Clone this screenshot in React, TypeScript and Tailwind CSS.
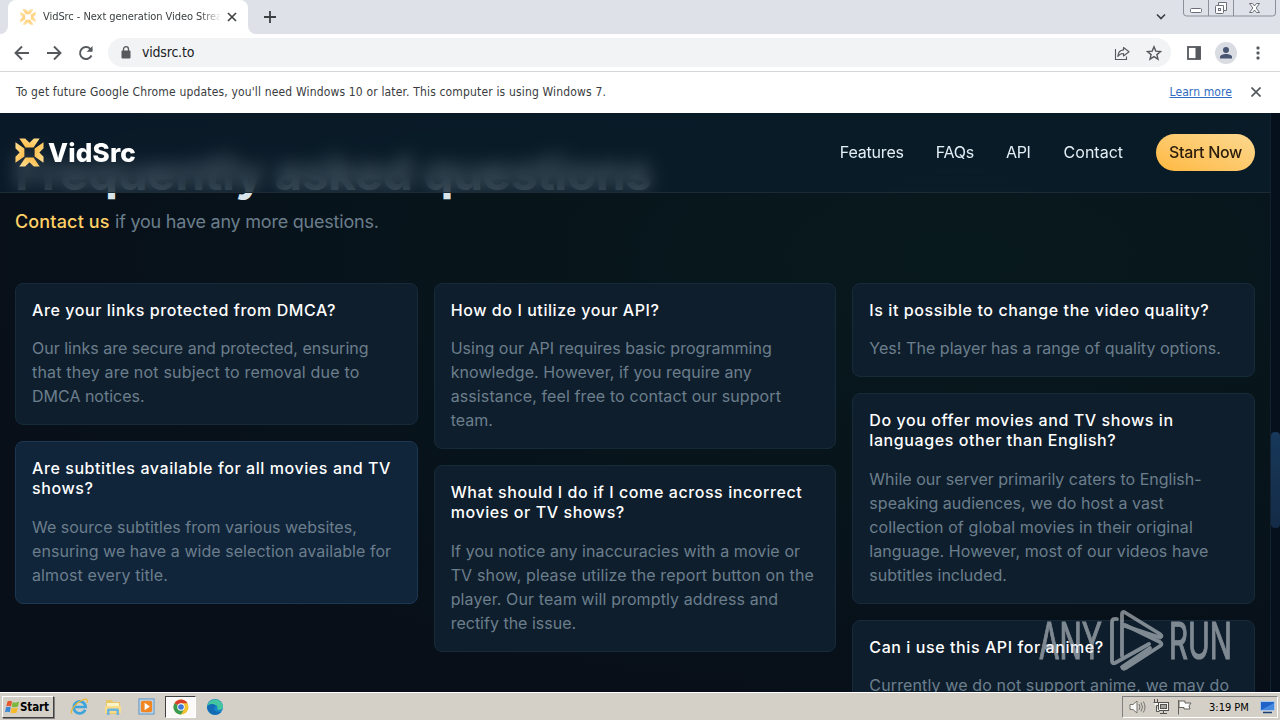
import React from 'react';

// A line is plain text, or text with its own letter spacing class
type Line = string | [string, string];

interface Faq {
  title: string[];
  body: Line[];
  highlight?: boolean;
}

const COLUMNS: Faq[][] = [
  [
    {
      title: ['Are your links protected from DMCA?'],
      body: [
        'Our links are secure and protected, ensuring',
        ['that they are not subject to removal due to', 'tracking-[0.19px]'],
        'DMCA notices.',
      ],
    },
    {
      title: ['Are subtitles available for all movies and TV', 'shows?'],
      body: [
        'We source subtitles from various websites,',
        ['ensuring we have a wide selection available for', 'tracking-[0.05px]'],
        ['almost every title.', 'tracking-[0.13px]'],
      ],
      highlight: true,
    },
  ],
  [
    {
      title: ['How do I utilize your API?'],
      body: [
        ['Using our API requires basic programming', 'tracking-[0.03px]'],
        ['knowledge. However, if you require any', 'tracking-[0.07px]'],
        ['assistance, feel free to contact our support', 'tracking-[0.11px]'],
        'team.',
      ],
    },
    {
      title: ['What should I do if I come across incorrect', 'movies or TV shows?'],
      body: [
        ['If you notice any inaccuracies with a movie or', 'tracking-[0.09px]'],
        ['TV show, please utilize the report button on the', 'tracking-[0.14px]'],
        ['player. Our team will promptly address and', 'tracking-[0.11px]'],
        'rectify the issue.',
      ],
    },
  ],
  [
    {
      title: ['Is it possible to change the video quality?'],
      body: [['Yes! The player has a range of quality options.', 'tracking-[0.04px]']],
    },
    {
      title: ['Do you offer movies and TV shows in', 'languages other than English?'],
      body: [
        'While our server primarily caters to English-',
        ['speaking audiences, we do host a vast', 'tracking-[0.04px]'],
        ['collection of global movies in their original', 'tracking-[0.11px]'],
        ['language. However, most of our videos have', 'tracking-[0.07px]'],
        'subtitles included.',
      ],
    },
    {
      title: ['Can i use this API for anime?'],
      body: [['Currently we do not support anime, we may do', 'tracking-[0.13px]']],
    },
  ],
];

const LogoMark: React.FC<{ className: string }> = ({ className }) => (
  <svg viewBox="0 0 30 30" className={className}>
    <defs>
      <linearGradient id="gold" x1="0" y1="1" x2="1" y2="0">
        <stop offset="0" stopColor="#ffb83f" />
        <stop offset="1" stopColor="#ffdf94" />
      </linearGradient>
    </defs>
    <g fill="url(#gold)">
      {[0, 90, 180, 270].map((deg) => (
        <path key={deg} transform={`rotate(${deg} 15 15)`} d="M4.500 0.500h6l4.500 4.300 4.500-4.300h6l-6.300 9.200h-8.400z" />
      ))}
    </g>
  </svg>
);

const TabStrip = () => (
  <div className="flex h-[34px] bg-[#dee1e8]">
    <div className="flex w-2 items-end bg-white">
      <div className="h-full w-2 rounded-br-lg bg-[#dee1e8]" />
    </div>
    <div className="flex w-[240px] items-center rounded-t-lg bg-white pl-3 pr-[9px]">
      <LogoMark className="h-4 w-4 shrink-0 opacity-75" />
      <div className="ml-[7px] mt-px w-[177px] overflow-hidden whitespace-nowrap text-[11px] tracking-[-0.06px] text-[#3c4043] [mask-image:linear-gradient(to_right,black_157px,transparent_179px)]">
        VidSrc - Next generation Video Streaming
      </div>
      <svg viewBox="0 0 10 10" className="ml-[7px] h-[10px] w-[10px] shrink-0" stroke="#3c4043" strokeWidth="1.600">
        <path d="M1 1l8 8M9 1l-8 8" />
      </svg>
    </div>
    <div className="w-2 bg-white">
      <div className="h-full w-2 rounded-bl-lg bg-[#dee1e8]" />
    </div>
    <div className="flex flex-1 items-center pl-2">
      <svg viewBox="0 0 12 12" className="h-3 w-3" stroke="#3c4043" strokeWidth="1.800">
        <path d="M6 0v12M0 6h12" />
      </svg>
    </div>
    <svg viewBox="0 0 10 8" className="mr-[17px] mt-[13px] h-2 w-[10px]" fill="none" stroke="#3c4043" strokeWidth="1.700">
      <path d="M1 1.500l4 4 4-4" />
    </svg>
    <svg viewBox="0 0 93 17" className="mr-[4px] h-[17px] w-[93px]" fill="none" stroke="#6b6f78">
      <path d="M0.500 0v13q0 3 3 3h86q3 0 3-3V0M25.500 0v16M50.500 0v16" stroke="#8b8f99" />
      <rect x="7.500" y="8.500" width="11" height="4" rx="1" fill="#fff" />
      <path d="M35.500 2.500h8v8h-3v-5h-5z" fill="#fff" />
      <rect x="32.500" y="5.500" width="8" height="8" rx="1" fill="#fff" />
      <rect x="35.500" y="8.500" width="2" height="2" />
      <path d="M66.500 3.500h3l2 2.500 2-2.500h3l-3.300 4.500 3.300 4.500h-3l-2-2.500-2 2.500h-3l3.300-4.500z" fill="#fff" />
    </svg>
  </div>
);

const Toolbar = () => (
  <div className="flex h-[38px] items-center border-b border-[#d5d7da] bg-white pl-[14px] pr-[14px]">
    <svg viewBox="0 0 16 16" className="h-4 w-4" fill="none" stroke="#55585d" strokeWidth="1.900">
      <path d="M15 8H2M8 1.500L1.500 8 8 14.500" />
    </svg>
    <svg viewBox="0 0 16 16" className="ml-4 h-4 w-4" fill="none" stroke="#55585d" strokeWidth="1.900">
      <path d="M1 8h13M8 1.500L14.500 8 8 14.500" />
    </svg>
    <svg viewBox="0 0 16 16" className="ml-4 h-4 w-4" fill="none" stroke="#55585d" strokeWidth="1.900">
      <path d="M13.500 10.500A6 6 0 1 1 12.300 3.800L14 5.500" />
      <path d="M14.500 1v5.800H8.700z" fill="#55585d" stroke="none" />
    </svg>
    <div className="ml-[14px] flex h-[29px] w-[1063px] items-center rounded-full bg-[#f1f3f4] pl-[13px] pr-[9px]">
      <svg viewBox="0 0 10 13" className="h-[13px] w-[10px]">
        <rect x="0.500" y="4.500" width="9" height="8" rx="1" fill="#55585d" />
        <path d="M2.500 5V3.200a2.500 2.500 0 0 1 5 0V5" fill="none" stroke="#55585d" strokeWidth="1.300" />
      </svg>
      <span className="ml-[11px] flex-1 text-[14px] tracking-[-0.2px] text-[#202124]">vidsrc.to</span>
      <svg viewBox="0 0 16 16" className="mr-4 h-4 w-4" fill="none" stroke="#55585d" strokeWidth="1.100">
        <path d="M1.500 4v10.500H12.500V11.500" />
        <path d="M9.500 2.500L15 6.800 9.500 11V8.500C6.500 8.500 5 9.500 3.800 11.500 4 8 6 5.200 9.500 4.900z" strokeLinejoin="round" />
      </svg>
      <svg viewBox="0 0 16 16" className="h-4 w-4" fill="none" stroke="#55585d" strokeWidth="1.400">
        <path d="M8 1.800l1.800 4.300 4.700.4-3.600 3.100 1.100 4.600L8 11.700l-4 2.500 1.100-4.600L1.500 6.500l4.700-.4z" />
      </svg>
    </div>
    <svg viewBox="0 0 14 14" className="ml-4 h-[14px] w-[14px]">
      <rect x="1" y="1" width="12" height="12" fill="none" stroke="#55585d" strokeWidth="1.800" />
      <rect x="8.500" y="1" width="5" height="12" fill="#55585d" />
    </svg>
    <svg viewBox="0 0 22 22" className="ml-[14px] h-[22px] w-[22px]">
      <circle cx="11" cy="11" r="11" fill="#dadce3" />
      <circle cx="11" cy="8" r="3" fill="#475573" />
      <path d="M5 16.500v-1.500c0-2 3-3 6-3s6 1 6 3v1.500z" fill="#475573" />
    </svg>
    <svg viewBox="0 0 4 14" className="ml-[19px] h-[14px] w-1" fill="#55585d">
      <rect x="0.500" y="0.500" width="3" height="3" rx="1" />
      <rect x="0.500" y="5.500" width="3" height="3" rx="1" />
      <rect x="0.500" y="10.500" width="3" height="3" rx="1" />
    </svg>
  </div>
);

const InfoBar = () => (
  <div className="flex h-[41px] items-center bg-white pl-4 pr-[19px] text-[12px] text-[#3a3c40]">
    <span className="flex-1 whitespace-nowrap pb-0.5 tracking-[0.16px]">
      To get future Google Chrome updates, you'll need Windows 10 or later. This computer is using Windows 7.
    </span>
    <a className="pb-0.5 tracking-[0.1px] text-[#2f6cc0] underline">Learn more</a>
    <svg viewBox="0 0 10 10" className="mb-0.5 ml-[19px] h-[10px] w-[10px]" stroke="#55585d" strokeWidth="1.700">
      <path d="M0.500 0.500l9 9M9.500 0.500l-9 9" />
    </svg>
  </div>
);

const Lines: React.FC<{ lines: Line[] }> = ({ lines }) => (
  <>
    {lines.map((line) => {
      const [text, spacing] = typeof line === 'string' ? [line, ''] : line;
      return (
        <span key={text} className={`block whitespace-nowrap ${spacing}`}>
          {text}
        </span>
      );
    })}
  </>
);

const FaqCard: React.FC<{ faq: Faq }> = ({ faq }) => (
  <div
    className={`rounded-lg border p-4 ${
      faq.highlight ? 'border-[#1b3752] bg-[#10243a]' : 'border-[#162a39] bg-[#0f1e2d]'
    }`}
  >
    <h3 className="text-[16px] font-medium leading-5 tracking-[0.58px] text-white">
      <Lines lines={faq.title} />
    </h3>
    <p className="mt-[16.4px] text-[16px] leading-6 text-[#6b7e8c]">
      <Lines lines={faq.body} />
    </p>
  </div>
);

const SiteHeader = () => (
  <header className="absolute inset-x-0 top-0 flex h-20 items-center border-b border-[#1c2b36] bg-[#0b1e2d]/70 px-[15px] backdrop-blur-[9px]">
    <LogoMark className="h-[29px] w-[29px]" />
    <span className="ml-[4px] mt-px text-[26px] font-extrabold leading-none tracking-[0.2px] text-white">VidSrc</span>
    <nav className="ml-auto flex items-center gap-8 text-[16px] text-[#e3eef5]">
      <a className="pb-0.5 tracking-[-0.2px]">Features</a>
      <a className="pb-0.5 tracking-[-0.25px]">FAQs</a>
      <a className="mr-px pb-0.5 tracking-[-0.3px]">API</a>
      <a className="mr-px pb-0.5">Contact</a>
      <a className="flex h-[37px] w-[99px] items-center justify-center whitespace-nowrap rounded-full bg-linear-to-tr from-[#ffb93e] to-[#fbd88e] pb-0.5 font-medium tracking-[-0.3px] text-[#2b1c0c]">
        Start Now
      </a>
    </nav>
  </header>
);

const Watermark = () => (
  <svg viewBox="0 0 194 62" className="absolute left-[1039px] top-[497px] h-[62px] w-[194px] opacity-55">
    <g fill="#dce1e5" stroke="#dce1e5" strokeWidth="1.200" fontFamily="Inter, sans-serif" fontWeight="400" fontSize="51">
      <text x="0" y="49" textLength="63" lengthAdjust="spacingAndGlyphs">ANY</text>
      <text x="130" y="49" textLength="63" lengthAdjust="spacingAndGlyphs">RUN</text>
    </g>
    <g fill="none" stroke="#dce1e5" strokeWidth="3.800" strokeLinejoin="round" strokeLinecap="round">
      <path d="M83 46V4q0-3 3-1.500L121 24q3 2 0 3.500L86 16" />
      <path d="M78 9q-5-1-5 3v39q0 3 3 2L110 34" />
      <path d="M86 15l35 17q3 2 0 4L87 58q-3 2-4-1l28-19" />
    </g>
  </svg>
);

const Page = () => (
  <main className="relative flex h-[579px] overflow-hidden bg-[#070f18] bg-[radial-gradient(ellipse_at_75%_25%,#08191e_0%,#07151b_35%,#080f19_75%)] font-[Inter,sans-serif]">
    <div className="relative w-[1270px] px-[15px] pt-[30px]">
      <h2 className="whitespace-nowrap text-[48px] font-bold leading-[60px] tracking-[-0.45px] text-[#d9e3ea]">
        Frequently asked questions
      </h2>
      <p className="mt-[5px] text-[18px] leading-7 tracking-[-0.22px] text-[#6b7e8c]">
        <a className="mr-[0.5px] font-medium tracking-[0.15px] text-[#ffd166]">Contact us</a> if you have any more questions.
      </p>
      <div className="mt-[47px] grid grid-cols-3 items-start gap-4">
        {COLUMNS.map((faqs, i) => (
          <div key={i} className="flex flex-col gap-4">
            {faqs.map((faq) => (
              <FaqCard key={faq.title[0]} faq={faq} />
            ))}
          </div>
        ))}
      </div>
      <SiteHeader />
    </div>
    <div className="w-[10px] border-l border-[#122230] bg-[#060f1c] pt-[319px]">
      <div className="h-24 rounded-sm bg-linear-to-b from-[#17385a] to-[#142b46]" />
    </div>
    <Watermark />
  </main>
);

const Taskbar = () => (
  <footer className="flex h-7 items-center border-t border-white bg-[#d4d0c8] pl-[2px]">
    <button className="flex h-[22px] w-[52px] items-center border border-b-[#404040] border-l-white border-r-[#404040] border-t-white pl-px shadow-[1px_1px_0_#808080]">
      <svg viewBox="0 0 16 16" className="h-4 w-4 shrink-0">
        <path d="M3.500 2.500Q6 1 8 2.500L7 7.500Q4.500 6 2.200 7.500z" fill="#e8542c" />
        <path d="M8.700 3Q12 4.500 15 2.500L14 7.500Q11 9 7.800 7.700z" fill="#7bb83a" />
        <path d="M2 8.300Q4.500 7 6.800 8.300L5.800 13.300Q3.500 12 1 13.300z" fill="#3c86d4" />
        <path d="M7.600 8.700Q11 10 13.800 8.500L12.800 13.500Q10 15 6.600 13.700z" fill="#f6b92c" />
      </svg>
      <span className="pt-0.5 text-[11.500px] font-bold tracking-[-0.1px] text-black">Start</span>
    </button>
    <svg viewBox="0 0 20 20" className="ml-4 h-[19px] w-[19px]" fill="none">
      <path d="M16 13.500A6.300 6.300 0 1 1 16.500 10.500H5" stroke="#3da5dc" strokeWidth="2.800" />
      <path d="M2 17.500C-1 14 8 5 14 2.800c4-1.500 5 .2 4 3.200" stroke="#e8b93a" strokeWidth="1.300" />
    </svg>
    <svg viewBox="0 0 18 18" className="ml-[15px] h-[18px] w-[18px]">
      <path d="M2 2h6l1 2h7v12H2z" fill="#e9c768" />
      <path d="M3 5h12v4H3z" fill="#fbf3c8" />
      <path d="M1 8h16v7H1z" fill="#f7dd8b" />
      <path d="M3 17v-5q0-1.500 1.500-1.500h9q1.500 0 1.500 1.500v5h-2.500v-4h-7v4z" fill="#6db5dc" />
    </svg>
    <svg viewBox="0 0 18 18" className="ml-4 h-[17px] w-[17px]">
      <rect x="1" y="1" width="16" height="16" fill="#b9d6ee" stroke="#5a93c2" />
      <rect x="3" y="3" width="12" height="12" rx="2" fill="#f08722" />
      <path d="M7 5l5.500 4L7 13z" fill="#fff" />
    </svg>
    <div className="ml-[10px] flex h-[22px] w-[31px] items-center justify-center border border-b-white border-l-[#404040] border-r-white border-t-[#404040] bg-[#fbfaf9]">
      <svg viewBox="0 0 16 16" className="h-4 w-4">
        <circle cx="8" cy="8" r="7.500" fill="#f2c231" />
        <path d="M8 8L1.500 4.250A7.500 7.500 0 0 1 14.500 4.250H8z" fill="#d9412f" />
        <path d="M8 8L1.500 4.250A7.500 7.500 0 0 0 8 15.500l3.300-5.700z" fill="#3b9b50" />
        <circle cx="8" cy="8" r="3.700" fill="#fff" />
        <circle cx="8" cy="8" r="2.800" fill="#3f78d8" />
      </svg>
    </div>
    <svg viewBox="0 0 18 18" className="ml-[10px] h-[18px] w-[18px]">
      <circle cx="9" cy="9" r="8" fill="#1683c6" />
      <path d="M1.200 8A8 8 0 0 1 17 8.500C17 12 13 12.500 11 11.200 13 8 9 4.500 1.200 8z" fill="#43c6a0" />
      <path d="M1 9C2 5.500 9 5 9.500 8.500 7 8.500 6 14.500 15 14 10 19.500 1.500 16 1 9z" fill="#126bb3" />
    </svg>
    <div className="ml-auto mr-[2px] flex h-[22px] w-[156px] items-center border border-b-white border-l-[#808080] border-r-white border-t-[#808080] pl-[6px]">
      <svg viewBox="0 0 17 14" className="h-[14px] w-[17px]" fill="none" stroke="#77746e">
        <path d="M1 4.500h3L8 1v12L4 9.500H1z" fill="#f8f8f6" />
        <path d="M10 4q2 3 0 6M12 2.500q3 4.500 0 9M14.300 1.500q3.400 5.500 0 11" />
      </svg>
      <svg viewBox="0 0 16 16" className="ml-[7px] h-4 w-4" fill="#f5f5f3" stroke="#55534f">
        <rect x="5.500" y="3.500" width="10" height="8" />
        <rect x="7.500" y="5.500" width="6" height="4" fill="#a5a39e" />
        <path d="M7 14.500h7M10.500 12v2M1.500 0v3M4.500 0v3M0.500 3.500h5v3h-2v6h3" />
      </svg>
      <svg viewBox="0 0 16 16" className="ml-2 h-4 w-4" fill="#fcfcfb" stroke="#64625e">
        <path d="M1.500 1v14.500M2 2h6v2h6l-2 3 1 3H7V8.500H2z" />
      </svg>
      <span className="ml-[16px] whitespace-nowrap pt-[3px] text-[11px] leading-4 text-black">3:19 PM</span>
      <svg viewBox="0 0 15 13" className="ml-[11px] mt-px h-[13px] w-[15px] shrink-0">
        <rect x="0.500" y="0.500" width="14" height="9" fill="#1e62c8" stroke="#a9c7ea" />
        <path d="M1 9L14 2v7z" fill="#4489de" />
        <path d="M3 11.500h9" stroke="#1b3e77" strokeWidth="1.500" />
      </svg>
    </div>
  </footer>
);

export default function App() {
  return (
    <div className="h-[720px] w-[1280px] overflow-hidden bg-white font-['DejaVu_Sans_Condensed','DejaVu_Sans',sans-serif]">
      <TabStrip />
      <Toolbar />
      <InfoBar />
      <Page />
      <Taskbar />
    </div>
  );
}
